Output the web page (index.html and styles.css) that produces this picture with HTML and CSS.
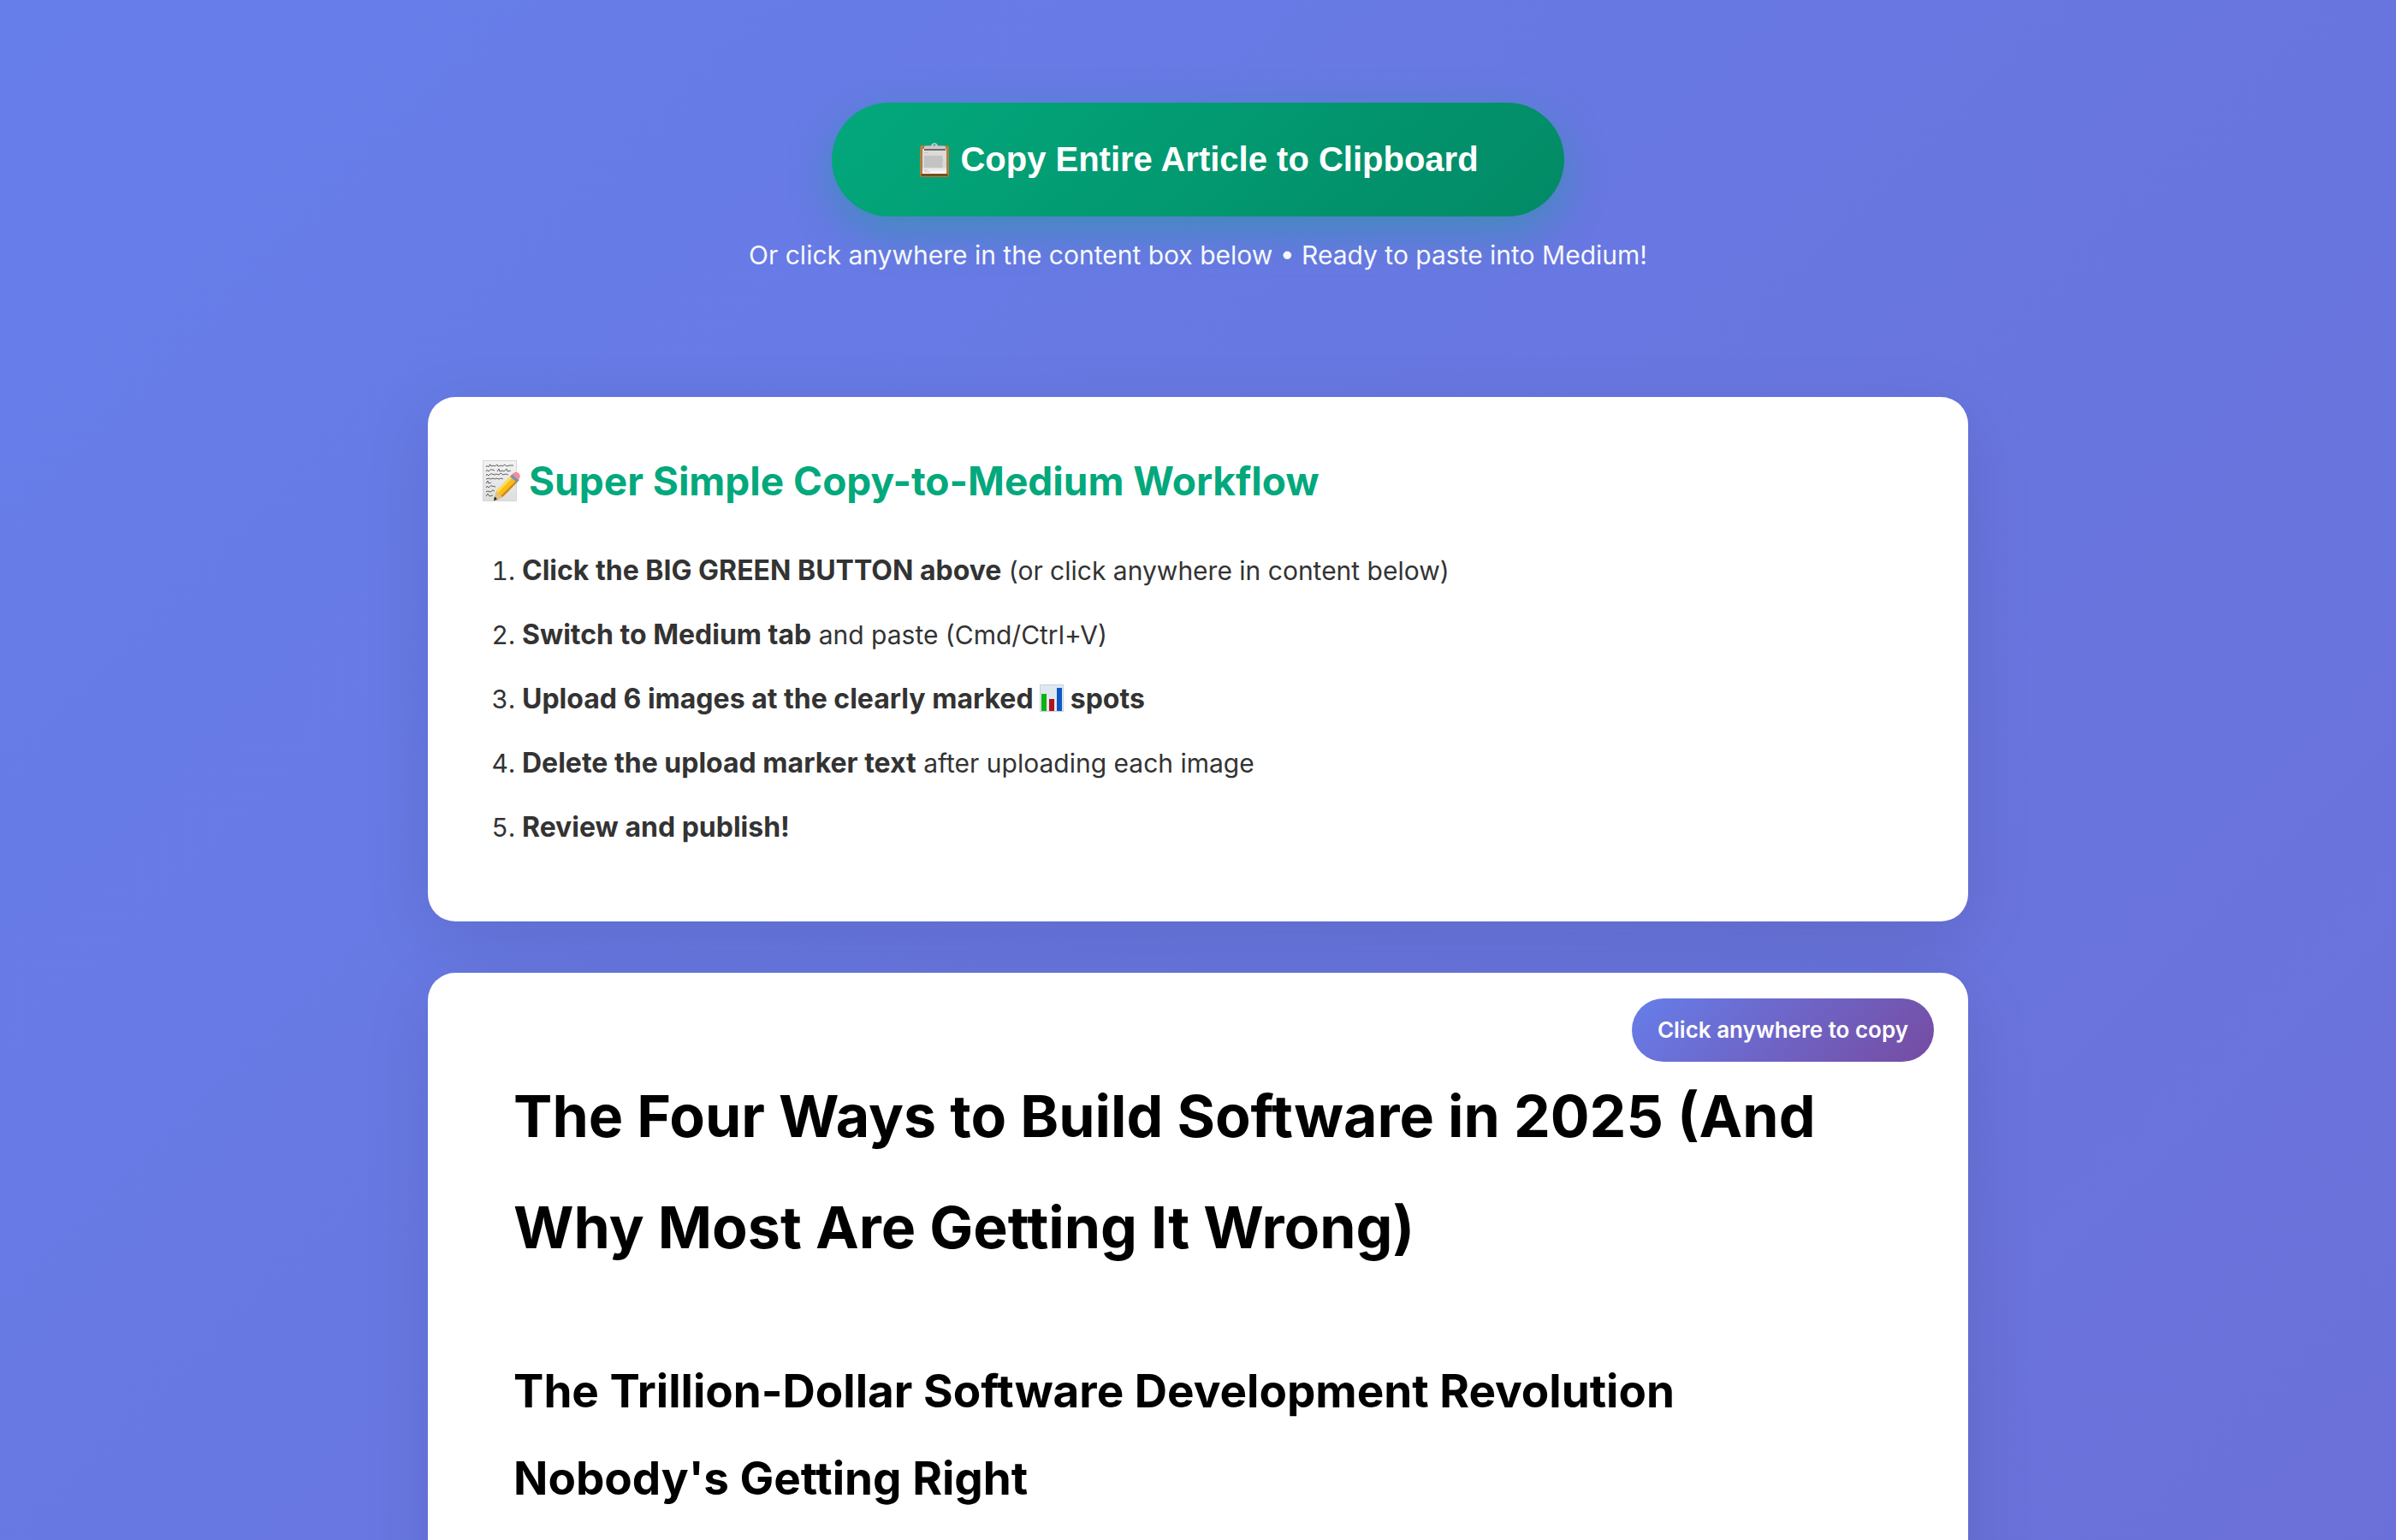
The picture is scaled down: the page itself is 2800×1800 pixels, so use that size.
FILE: index.html
```html
<!DOCTYPE html>
<html lang="en">
<head>
<meta charset="utf-8">
<title>Copy to Medium</title>
<meta name="viewport" content="width=device-width, initial-scale=1">
<link rel="stylesheet" href="styles.css">
</head>
<body>
<main class="page">
  <header class="copy-area">
    <button type="button" class="copy-button">
      <svg class="icon icon-clipboard" viewBox="0 0 38 42" aria-hidden="true">
        <defs>
          <linearGradient id="sheet" x1="0" y1="0" x2="0" y2="1">
            <stop offset="0" stop-color="#dcdcdc"/><stop offset=".7" stop-color="#d8d8d8"/><stop offset="1" stop-color="#fff"/>
          </linearGradient>
        </defs>
        <rect x="3" y="4" width="34" height="37" rx="2.5" fill="#b07f3f"/>
        <rect x="4.500" y="37" width="31" height="3" fill="#7a4e1c"/>
        <rect x="6" y="8" width="28" height="29" fill="url(#sheet)"/>
        <path d="M8 16h21l1 5-1 5 1 4H8z" fill="#c3c3c3"/>
        <path d="M8 12.500h4M8 33h4M8 35h7" stroke="#c4c4c4" fill="none"/>
        <rect x="8" y="8" width="25" height="2" fill="#77695c"/>
        <path d="M8 8V6q0-1.500 2-1.500h6q1-3.500 4-3.500t4 3.500h6q3 0 3 1.500v2z" fill="#c6cad6"/>
        <circle cx="20" cy="3.500" r="1.300" fill="#5a9a93"/>
      </svg>
      <span>Copy Entire Article to Clipboard</span>
    </button>
    <p class="copy-hint">Or click anywhere in the content box below • Ready to paste into Medium!</p>
  </header>

  <section class="card workflow">
    <h2 class="workflow-title">
      <svg class="icon icon-memo" viewBox="0 0 44 48" aria-hidden="true">
        <defs>
          <linearGradient id="paper" x1="0" y1="0" x2="0" y2="1">
            <stop offset="0" stop-color="#f3f3f3"/><stop offset="1" stop-color="#dedede"/>
          </linearGradient>
        </defs>
        <rect x=".5" y=".5" width="39" height="47" fill="url(#paper)" stroke="#d6d6d6"/>
        <path d="M4 8q1-3 2-1t2-1 2 1l3-1 1 1 3-2 1 2 4-1 1 1 3-2 2 2 3-1 5 0M4 13q1-3 2-1t2 0 3-1l3 1M17 13l2-3 1 3 3-1 2 1 3-3 1 3 4-1M4 18q1-3 2-1t2 0 3-1l3 1 2-1 3 1 2-2 3 2 3-1 3 1M4 22l3-1 2 1 3-1 2 1 2-1 3 1 3-1 2 1M4 27l2-3 1 3 3-1M4 32q1-3 2-1t2 0 3-1l4 1M4 37l2-1 3 1 3-2 2 1M4 42l2-3 2 3 4-1" fill="none" stroke="#555" stroke-width=".9"/>
        <path d="M15 47q14-4 27-27l-3-2-22 22z" fill="#777" opacity=".35"/>
        <path d="M16 36 33 18l8 7-18 18-8 3z" fill="#f7bd1c"/>
        <path d="M16 36 33 18l2 2-17 18z" fill="#ffdc4f"/>
        <path d="m21 42 18-18 2 1-18 18z" fill="#cf8510"/>
        <path d="m16 36 7 7-9 4-1-2z" fill="#e6bd83"/>
        <path d="m14 42.500 3 2.800-4 2.200z" fill="#222"/>
        <path d="m32 19 3-3 8 7-3 3z" fill="#7892bd"/>
        <path d="m34.500 16.500 1.500-1.500q3-2.500 6 0 3 3 1 6l-1.500 2z" fill="#f18f95"/>
      </svg>
      <span>Super Simple Copy-to-Medium Workflow</span>
    </h2>
    <ol class="steps">
      <li><strong>Click the BIG GREEN BUTTON above</strong> (or click anywhere in content below)</li>
      <li><strong>Switch to Medium tab</strong> and paste (Cmd/Ctrl+V)</li>
      <li><strong>Upload 6 images at the clearly marked
        <svg class="icon icon-chart" viewBox="0 0 28 32" aria-hidden="true">
          <rect x=".5" y=".5" width="27" height="31" fill="#dfe8f1" stroke="#c9d2da"/>
          <rect x="2" y="11" width="6" height="20" fill="#0db313"/>
          <rect x="11" y="17" width="6" height="14" fill="#b5121b"/>
          <rect x="20" y="4" width="6" height="27" fill="#0f58c4"/>
        </svg>
        spots</strong></li>
      <li><strong>Delete the upload marker text</strong> after uploading each image</li>
      <li><strong>Review and publish!</strong></li>
    </ol>
  </section>

  <article class="card article">
    <span class="copy-badge">Click anywhere to copy</span>
    <h1 class="article-title">The Four Ways to Build Software in 2025 (And Why Most Are Getting It Wrong)</h1>
    <h2 class="article-subtitle">The Trillion-Dollar Software Development Revolution Nobody's Getting Right</h2>
  </article>
</main>
</body>
</html>
```
FILE: styles.css
```css
* {
  box-sizing: border-box;
}

body {
  margin: 0;
  min-height: 100vh;
  background: linear-gradient(135deg, #667eea 0%, #6b70d8 100%);
  color: #333;
  font-family: Inter, "Liberation Sans", sans-serif;
  font-size: 30px;
  line-height: 59px;
}

.page {
  max-width: 1880px;
  margin: 0 auto;
  padding: 120px 40px 0;
}

.icon {
  flex: none;
  display: inline-block;
}

.copy-area {
  display: flex;
  flex-direction: column;
  align-items: center;
  gap: 16px;
  margin-bottom: 136px;
}

.copy-button {
  display: flex;
  align-items: center;
  gap: 12px;
  padding: 44px 100px;
  border: 0;
  border-radius: 100px;
  background: linear-gradient(135deg, #03a87c 0%, #028a65 100%);
  box-shadow: 0 16px 50px rgba(3, 168, 124, 0.4);
  color: #fff;
  font-family: "Liberation Sans", sans-serif;
  font-size: 40px;
  font-weight: 700;
  line-height: 45px;
  cursor: pointer;
}

.icon-clipboard {
  width: 38px;
  height: 42px;
}

.copy-hint {
  margin: 0;
  color: #fff;
  opacity: 0.95;
  text-align: center;
}

.card {
  border-radius: 32px;
  background: #fff;
  box-shadow: 0 20px 80px rgba(0, 0, 0, 0.1);
}

.workflow {
  margin-bottom: 60px;
  padding: 60px 60px 72px;
}

.workflow-title {
  display: flex;
  align-items: center;
  gap: 10px;
  margin: 0 0 30px;
  padding-left: 4px;
  color: #03a87c;
  font-size: 46px;
  font-weight: 700;
  line-height: 76px;
}

.icon-memo {
  width: 44px;
  height: 48px;
}

.steps {
  margin: 0;
  padding-left: 50px;
}

.steps li {
  padding: 8px 0;
}

.steps strong {
  font-size: 32px;
  line-height: 1;
}

.icon-chart {
  width: 28px;
  height: 32px;
  vertical-align: -4px;
}

.article {
  position: relative;
  padding: 102px 100px;
  color: #000;
}

.copy-badge {
  position: absolute;
  top: 30px;
  right: 40px;
  padding: 16px 30px;
  border-radius: 40px;
  background: linear-gradient(135deg, #667eea 0%, #764ba2 100%);
  color: #fff;
  font-size: 26px;
  font-weight: 600;
  line-height: 42px;
}

.article-title {
  margin: 0 0 76px;
  font-size: 68px;
  font-weight: 700;
  line-height: 130px;
}

.article-subtitle {
  margin: 0;
  font-size: 53px;
  font-weight: 700;
  line-height: 102px;
}
```
